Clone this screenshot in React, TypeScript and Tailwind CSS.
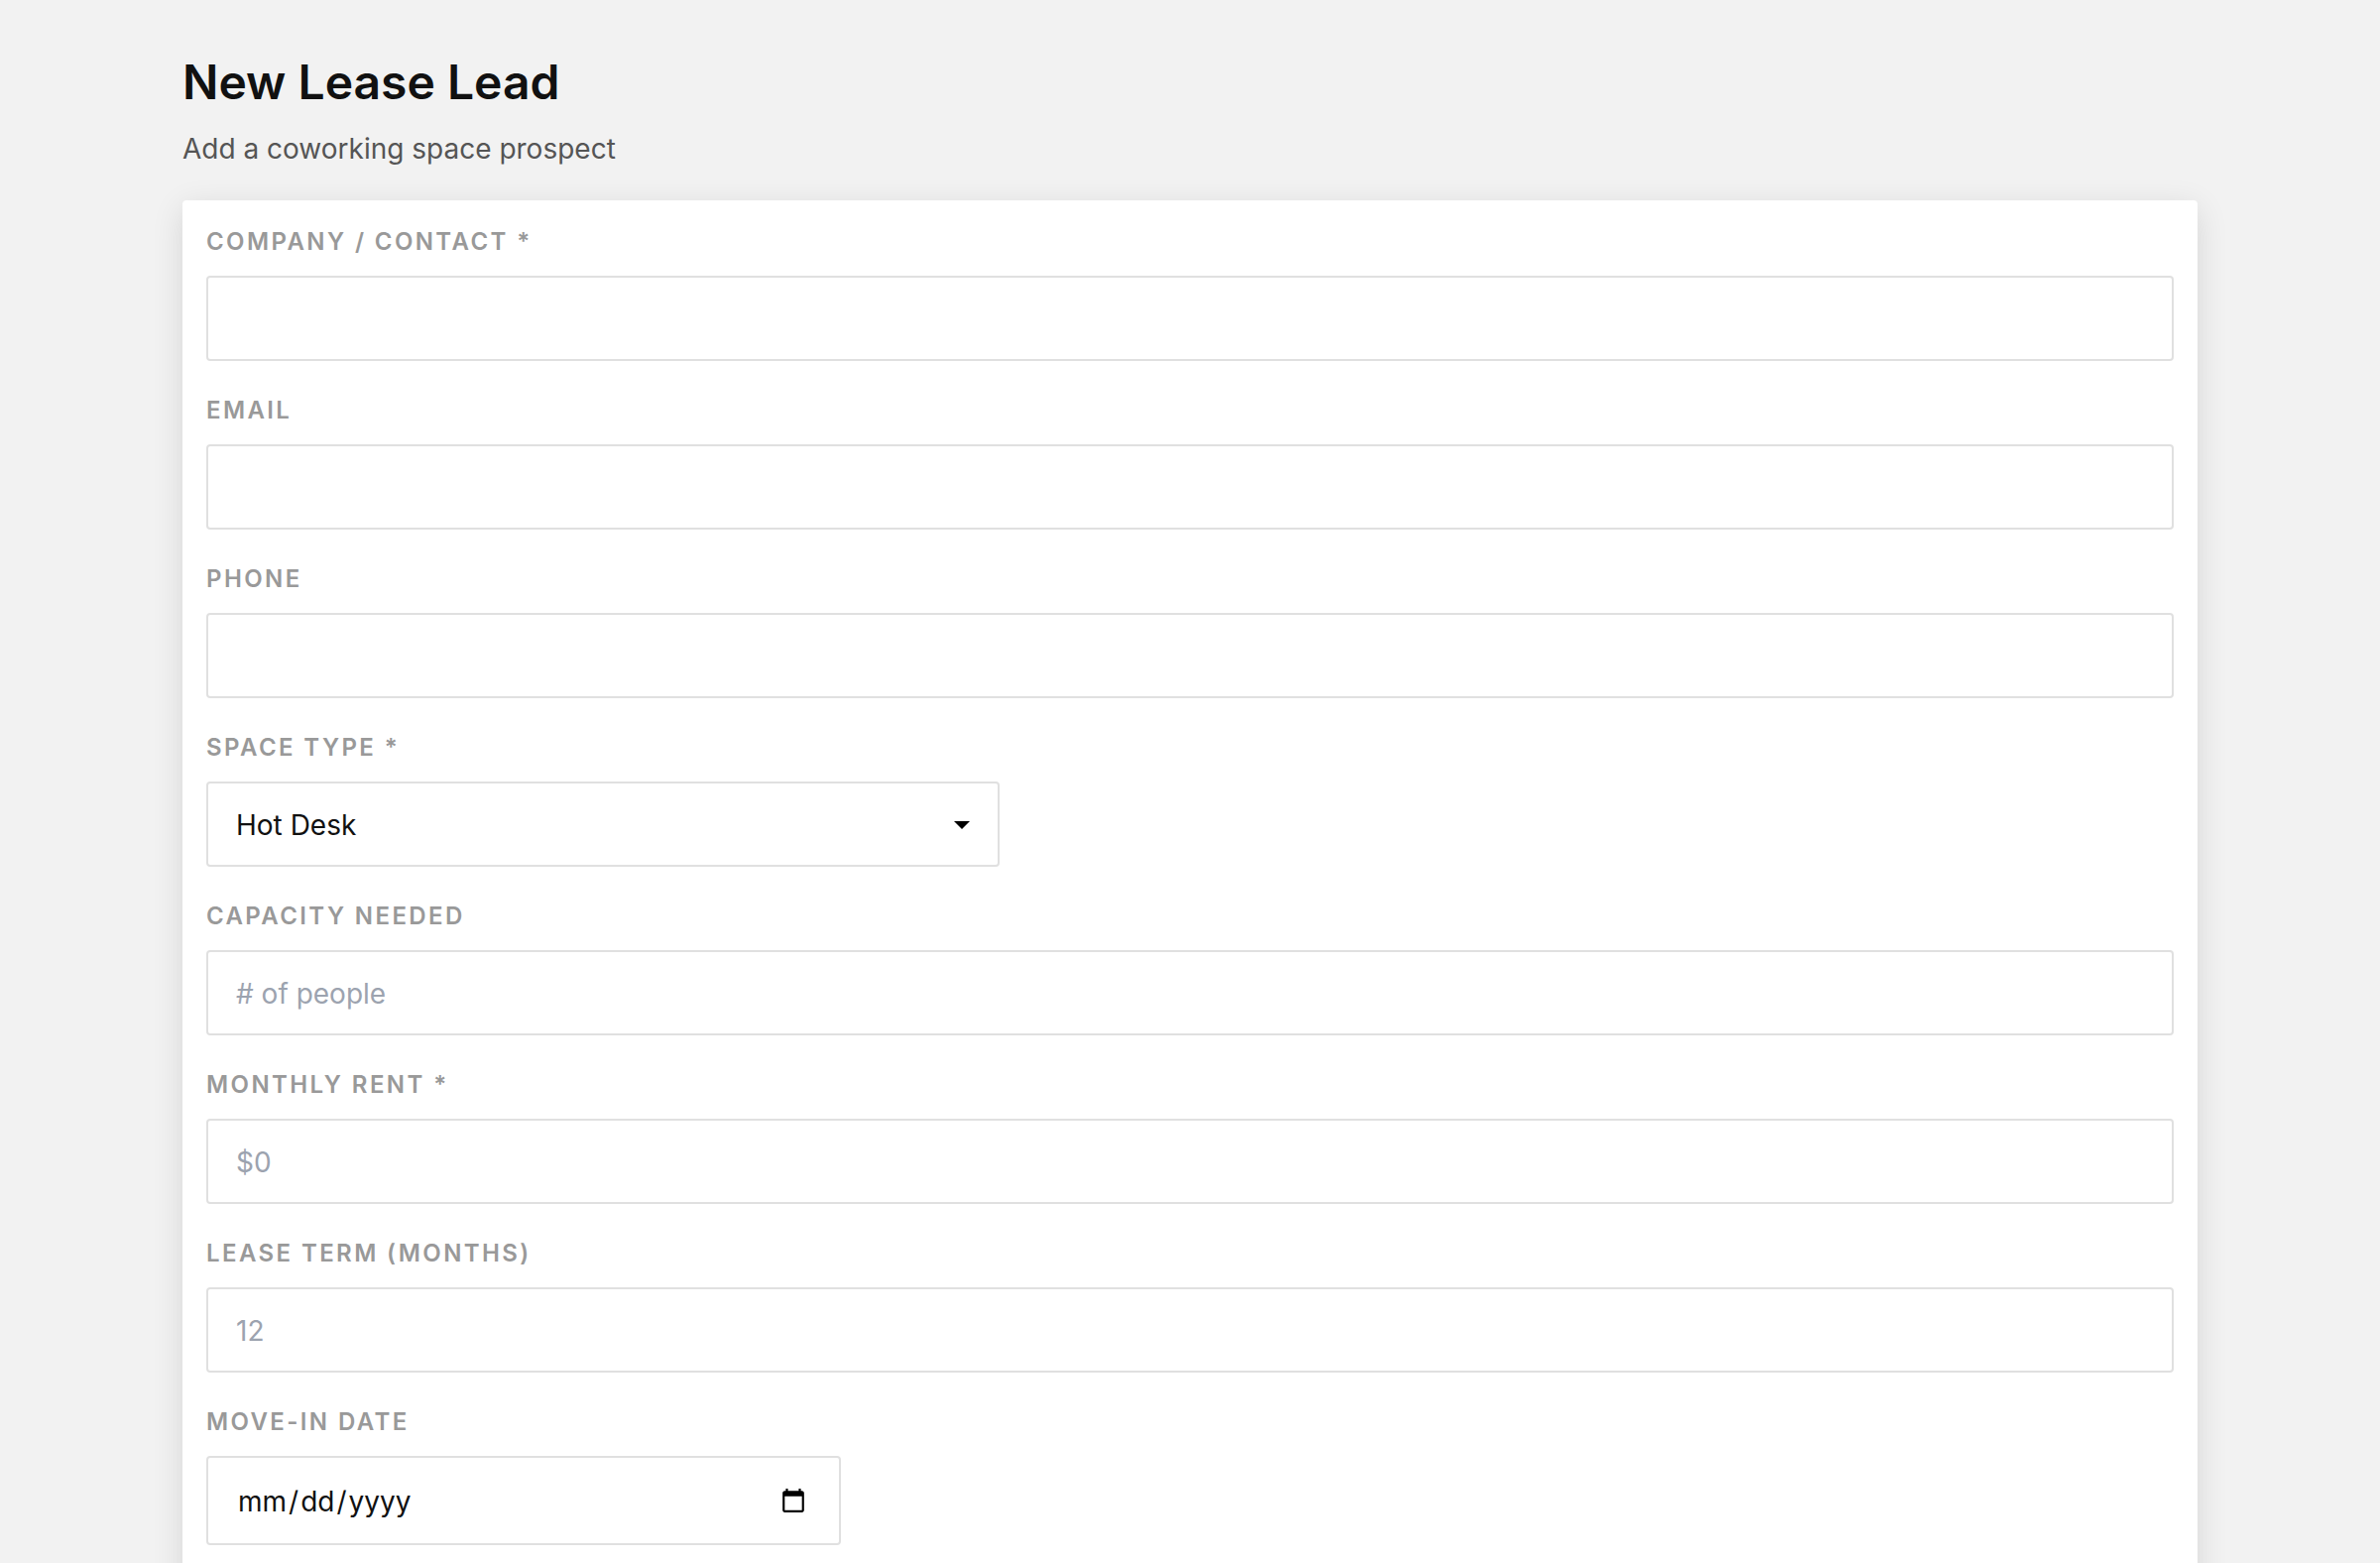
import type { ReactNode } from "react";

const spaceTypes = [
    "Hot Desk",
    "Dedicated Desk",
    "Private Office",
    "Meeting Room",
    "Virtual Office",
];

const controlClass =
    "rounded-sm border-2 border-[#e0e0e0] bg-white px-7 pt-[25px] pb-[23px] text-[28px] leading-[34px] text-[#111] outline-none placeholder:text-[#9ca3af] focus:border-[#111]";

// Chrome's own date parts: a little room around each one
const datePartsClass =
    "[&::-webkit-datetime-edit-month-field]:p-0.5 [&::-webkit-datetime-edit-day-field]:p-0.5 [&::-webkit-datetime-edit-year-field]:p-0.5 [&::-webkit-calendar-picker-indicator]:mr-0.5";

function Field({
    id,
    label,
    children,
}: {
    id: string;
    label: string;
    children: ReactNode;
}) {
    return (
        <div className="flex flex-col items-start gap-4">
            <label
                htmlFor={id}
                className="text-2xl leading-9 font-semibold tracking-widest text-[#999] uppercase"
            >
                {label}
            </label>
            {children}
        </div>
    );
}

function TextField({
    id,
    label,
    type = "text",
    placeholder,
    required,
}: {
    id: string;
    label: string;
    type?: string;
    placeholder?: string;
    required?: boolean;
}) {
    return (
        <Field id={id} label={label}>
            <input
                id={id}
                name={id}
                type={type}
                placeholder={placeholder}
                required={required}
                className={`${controlClass} w-full`}
            />
        </Field>
    );
}

export default function App() {
    return (
        <main className="h-screen overflow-hidden bg-[#f2f2f2] px-46 pt-12 font-['Inter',sans-serif] text-[#111]">
            <header className="mb-8">
                <h1 className="text-5xl leading-[70px] font-semibold">
                    New Lease Lead
                </h1>
                <p className="mt-3 text-[28px] leading-10 text-[#555]">
                    Add a coworking space prospect
                </p>
            </header>

            <form className="flex flex-col gap-8 rounded-sm bg-white p-6 pb-16 shadow-[0_8px_32px_rgba(0,0,0,0.12)]">
                <TextField id="company" label="Company / Contact *" required />
                <TextField id="email" label="Email" type="email" />
                <TextField id="phone" label="Phone" type="tel" />

                <Field id="spaceType" label="Space Type *">
                    <div className="relative w-[800px] max-w-full">
                        <select
                            id="spaceType"
                            name="spaceType"
                            required
                            className={`${controlClass} block w-full appearance-none`}
                        >
                            {spaceTypes.map((type) => (
                                <option key={type}>{type}</option>
                            ))}
                        </select>
                        <svg
                            viewBox="0 0 16 8"
                            className="pointer-events-none absolute top-10 right-[30px] h-2 w-4"
                            aria-hidden="true"
                        >
                            <path d="M0 0h16L8 8z" fill="#000" />
                        </svg>
                    </div>
                </Field>

                <TextField
                    id="capacity"
                    label="Capacity Needed"
                    type="number"
                    placeholder="# of people"
                />
                <TextField
                    id="rent"
                    label="Monthly Rent *"
                    type="number"
                    placeholder="$0"
                    required
                />
                <TextField
                    id="term"
                    label="Lease Term (Months)"
                    type="number"
                    placeholder="12"
                />

                <Field id="moveIn" label="Move-in Date">
                    <input
                        id="moveIn"
                        name="moveIn"
                        type="date"
                        className={`${controlClass} ${datePartsClass} h-[90px] w-[640px] max-w-full`}
                    />
                </Field>
            </form>
        </main>
    );
}
